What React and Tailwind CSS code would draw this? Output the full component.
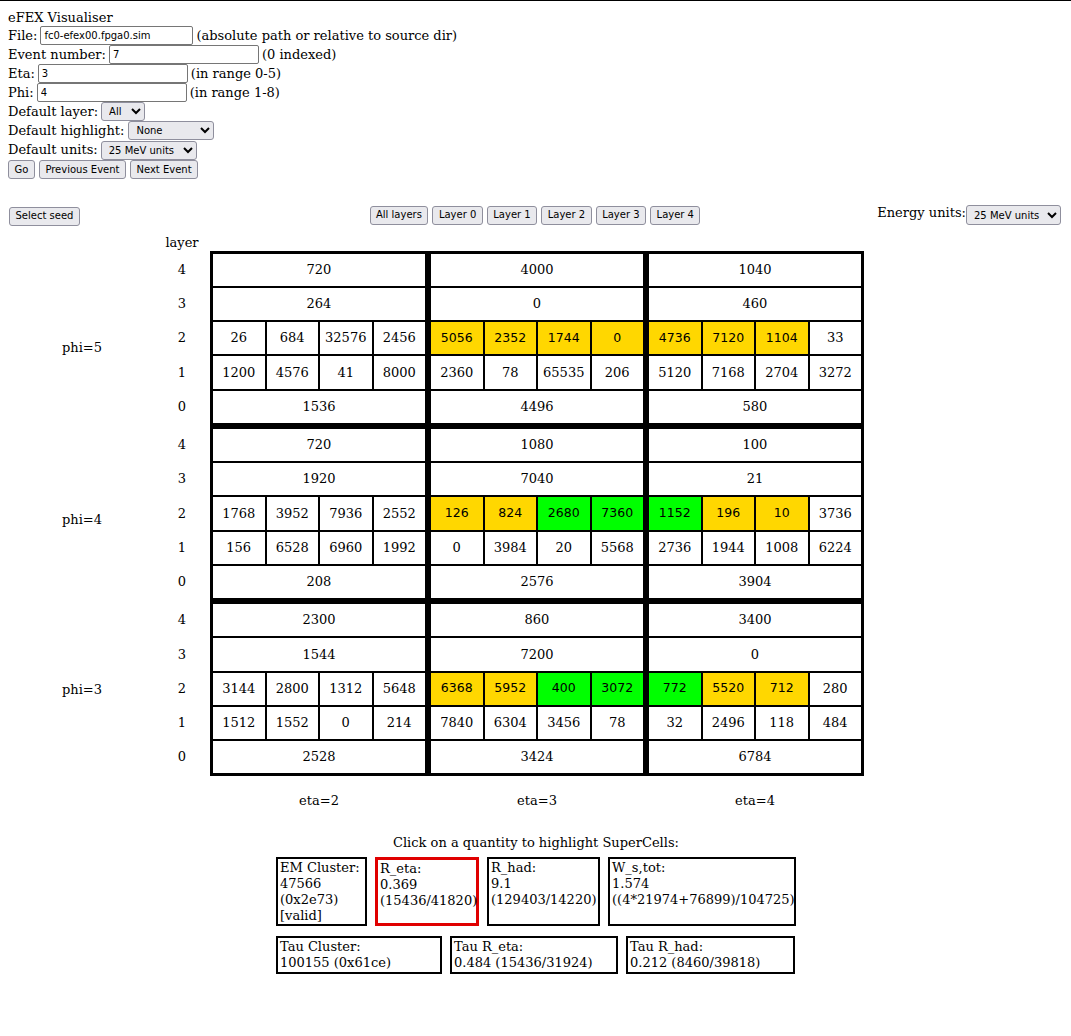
import { useState } from 'react'

// cell data per phi group: 5 layer rows (4..0), 3 eta columns each
// a column is either a single number or 4 [value, highlight] pairs
const groups = [
  {
    phi: 'phi=5',
    offset: 'pt-[20px]',
    rows: [
      ['4', [720, 4000, 1040]],
      ['3', [264, 0, 460]],
      ['2', [
        [[26], [684], [32576], [2456]],
        [[5056, 'y'], [2352, 'y'], [1744, 'y'], [0, 'y']],
        [[4736, 'y'], [7120, 'y'], [1104, 'y'], [33]],
      ]],
      ['1', [
        [[1200], [4576], [41], [8000]],
        [[2360], [78], [65535], [206]],
        [[5120], [7168], [2704], [3272]],
      ]],
      ['0', [1536, 4496, 580]],
    ],
  },
  {
    phi: 'phi=4',
    offset: 'pt-[12px]',
    rows: [
      ['4', [720, 1080, 100]],
      ['3', [1920, 7040, 21]],
      ['2', [
        [[1768], [3952], [7936], [2552]],
        [[126, 'y'], [824, 'y'], [2680, 'g'], [7360, 'g']],
        [[1152, 'g'], [196, 'y'], [10, 'y'], [3736]],
      ]],
      ['1', [
        [[156], [6528], [6960], [1992]],
        [[0], [3984], [20], [5568]],
        [[2736], [1944], [1008], [6224]],
      ]],
      ['0', [208, 2576, 3904]],
    ],
  },
  {
    phi: 'phi=3',
    offset: 'pt-[2px]',
    rows: [
      ['4', [2300, 860, 3400]],
      ['3', [1544, 7200, 0]],
      ['2', [
        [[3144], [2800], [1312], [5648]],
        [[6368, 'y'], [5952, 'y'], [400, 'g'], [3072, 'g']],
        [[772, 'g'], [5520, 'y'], [712, 'y'], [280]],
      ]],
      ['1', [
        [[1512], [1552], [0], [214]],
        [[7840], [6304], [3456], [78]],
        [[32], [2496], [118], [484]],
      ]],
      ['0', [2528, 3424, 6784]],
    ],
  },
]

const btn =
  "h-[19px] rounded-[3px] border border-[#8f8f9d] bg-[#e9e9ed] px-[5.5px] font-['DejaVu_Sans',sans-serif] text-[10px] leading-none text-black"
const inp =
  "h-[19px] rounded-[2px] border border-[#767676] bg-white px-[3px] font-['DejaVu_Sans',sans-serif] text-[10px] text-black"
const sel =
  "h-[19px] rounded-[3px] border border-[#8f8f9d] bg-[#e9e9ed] pl-[3px] font-['DejaVu_Sans',sans-serif] text-[10px] text-black"

function Cell({ value, hl }) {
  const bg = hl === 'y' ? 'bg-[#ffd700]' : hl === 'g' ? 'bg-[#00ff00]' : 'bg-white'
  const font = hl ? "font-['DejaVu_Sans',sans-serif] text-[12.5px]" : ''
  return <div className={`flex items-center justify-center ${bg} ${font}`}>{value}</div>
}

function LayerRow({ cols }) {
  return (
    <div className="grid h-[32.25px] grid-cols-3 gap-[6px]">
      {cols.map((c, i) =>
        Array.isArray(c) ? (
          <div key={i} className="grid grid-cols-4 gap-[2px]">
            {c.map(([v, hl], j) => (
              <Cell key={j} value={v} hl={hl} />
            ))}
          </div>
        ) : (
          <Cell key={i} value={c} />
        )
      )}
    </div>
  )
}

function InfoBox({ w, red, lines }) {
  return (
    <div
      className={`${w} ${red ? 'border-[3px] border-[#e00000] pl-[2px]' : 'border-2 border-black pl-[2px]'} pt-[1px] leading-[16px]`}
    >
      {lines.map((l) => (
        <div key={l}>{l}</div>
      ))}
    </div>
  )
}

export default function App() {
  const [file, setFile] = useState('fc0-efex00.fpga0.sim')

  return (
    <div className="min-h-screen border-t border-black bg-white font-['DejaVu_Serif',serif] text-[13px] text-black">
      {/* settings form */}
      <div className="pl-[8px] pt-[8px]">
        <div className="flex h-[17px] items-center">eFEX Visualiser</div>
        <div className="flex h-[19px] items-center gap-[3px]">
          <span>File:</span>
          <input className={`${inp} w-[153px]`} value={file} onChange={(e) => setFile(e.target.value)} />
          <span>(absolute path or relative to source dir)</span>
        </div>
        <div className="flex h-[19px] items-center gap-[3px]">
          <span>Event number:</span>
          <input className={`${inp} w-[150px]`} defaultValue="7" />
          <span>(0 indexed)</span>
        </div>
        <div className="flex h-[19px] items-center gap-[3px]">
          <span>Eta:</span>
          <input className={`${inp} w-[150px]`} defaultValue="3" />
          <span>(in range 0-5)</span>
        </div>
        <div className="flex h-[19px] items-center gap-[3px]">
          <span>Phi:</span>
          <input className={`${inp} w-[150px]`} defaultValue="4" />
          <span>(in range 1-8)</span>
        </div>
        <div className="flex h-[19px] items-center gap-[3px]">
          <span>Default layer:</span>
          <select className={`${sel} w-[44px]`} defaultValue="All">
            <option>All</option>
          </select>
        </div>
        <div className="flex h-[19px] items-center gap-[3px]">
          <span>Default highlight:</span>
          <select className={`${sel} ml-[1px] w-[86px]`} defaultValue="None">
            <option>None</option>
          </select>
        </div>
        <div className="flex h-[20px] items-center gap-[3px]">
          <span>Default units:</span>
          <select className={`${sel} w-[96px]`} defaultValue="25 MeV units">
            <option>25 MeV units</option>
          </select>
        </div>
        <div className="flex h-[19px] items-center gap-[4px]">
          <button className={btn}>Go</button>
          <button className={btn}>Previous Event</button>
          <button className={btn}>Next Event</button>
        </div>
      </div>

      {/* view controls */}
      <div className="mt-[26px] grid grid-cols-[1fr_auto_1fr] items-center pl-[9px] pr-[10px]">
        <div>
          <button className={btn}>Select seed</button>
        </div>
        <div className="flex gap-[4px]">
          {['All layers', 'Layer 0', 'Layer 1', 'Layer 2', 'Layer 3', 'Layer 4'].map((l) => (
            <button key={l} className={btn}>
              {l}
            </button>
          ))}
        </div>
        <div className="flex items-center justify-end">
          <span className="-mt-[5px]">Energy units:</span>
          <select className={`${sel} h-[20px] w-[95px]`} defaultValue="25 MeV units">
            <option>25 MeV units</option>
          </select>
        </div>
      </div>

      {/* tower grid */}
      <div className="mt-[8px] flex">
        <div className="w-[164px]">
          <div className="h-[17px]" />
          <div className="flex flex-col gap-[6px] pt-[3px]">
            {groups.map((g) => (
              <div key={g.phi} className={`flex h-[169.25px] items-center justify-center ${g.offset}`}>
                {g.phi}
              </div>
            ))}
          </div>
        </div>
        <div className="w-[36px] text-center">
          <div className="h-[17px] leading-[17px]">layer</div>
          <div className="flex flex-col gap-[6px] pt-[3px]">
            {groups.map((g) => (
              <div key={g.phi} className="flex flex-col gap-[2px]">
                {g.rows.map(([l]) => (
                  <div key={l} className="flex h-[32.25px] items-center justify-center">
                    {l}
                  </div>
                ))}
              </div>
            ))}
          </div>
        </div>
        <div className="ml-[10px] w-[654px]">
          <div className="h-[17px]" />
          <div className="flex flex-col gap-[6px] border-[3px] border-black bg-black">
            {groups.map((g) => (
              <div key={g.phi} className="flex flex-col gap-[2px]">
                {g.rows.map(([l, cols]) => (
                  <LayerRow key={l} cols={cols} />
                ))}
              </div>
            ))}
          </div>
          <div className="mt-[15px] grid h-[19px] grid-cols-3 items-center gap-[6px] px-[3px] text-center">
            <div>eta=2</div>
            <div>eta=3</div>
            <div>eta=4</div>
          </div>
        </div>
      </div>

      {/* cluster quantities */}
      <div className="ml-[276px] mt-[25px]">
        <div className="h-[16px] w-[520px] text-center leading-[16px]">Click on a quantity to highlight SuperCells:</div>
        <div className="mt-[6px] flex h-[69px] gap-[8px]">
          <InfoBox w="w-[91px]" lines={['EM Cluster:', '47566', '(0x2e73)', '[valid]']} />
          <InfoBox w="w-[104px]" red lines={['R_eta:', '0.369', '(15436/41820)']} />
          <InfoBox w="w-[113px]" lines={['R_had:', '9.1', '(129403/14220)']} />
          <InfoBox w="w-[188px]" lines={['W_s,tot:', '1.574', '((4*21974+76899)/104725)']} />
        </div>
        <div className="mt-[10px] flex h-[38px] gap-[8px]">
          <InfoBox w="w-[166px]" lines={['Tau Cluster:', '100155 (0x61ce)']} />
          <InfoBox w="w-[168px]" lines={['Tau R_eta:', '0.484 (15436/31924)']} />
          <InfoBox w="w-[169px]" lines={['Tau R_had:', '0.212 (8460/39818)']} />
        </div>
      </div>
    </div>
  )
}
